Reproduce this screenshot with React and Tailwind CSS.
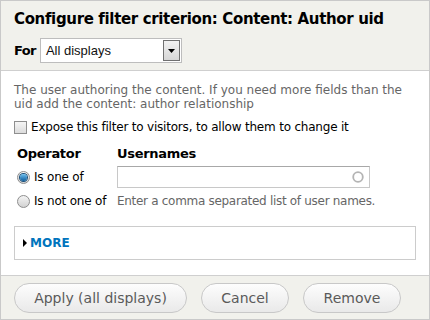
import React from 'react';

const Radio = ({ checked }) => (
  <span className="relative inline-flex h-[13px] w-[13px] shrink-0 items-center justify-center rounded-full border border-[#8e8e8e] bg-gradient-to-b from-[#f4f4f4] to-[#d2d2d2]">
    {checked && (
      <span className="h-[7px] w-[7px] rounded-full bg-gradient-to-b from-[#6cc0f0] to-[#0a5f9e] shadow-[0_0_0_1px_#1a4f7a]" />
    )}
  </span>
);

export default function App() {
  return (
    <div
      className="flex h-[320px] w-[430px] flex-col border border-[#c9c9c9] bg-white text-[#222]"
      style={{ fontFamily: '"DejaVu Sans", sans-serif' }}
    >
      {/* header */}
      <div className="h-[70px] shrink-0 border-b border-[#cfcfcf] bg-[#f1f1ec] px-[13px]">
        <h1 className="pt-[9px] text-[15px] font-bold leading-[18px] tracking-[-0.35px] text-black">
          Configure filter criterion: Content: Author uid
        </h1>
        <div className="mt-[10px] flex items-center gap-[4px]">
          <span className="text-[13px] font-bold tracking-[-0.6px] text-black">For</span>
          <div className="flex h-[25px] w-[142px] items-center border border-[#bdbdbd] bg-white pl-[5px] pr-[1px]">
            <span
              className="flex-1 text-[13px] text-[#111]"
              style={{ fontFamily: '"Liberation Sans", Arial, sans-serif' }}
            >
              All displays
            </span>
            <span className="flex h-[21px] w-[17px] items-center justify-center border border-[#707070] bg-gradient-to-b from-[#f2f2f2] to-[#d6d6d6]">
              <svg width="7" height="4" viewBox="0 0 7 4">
                <path d="M0 0h7L3.5 4z" fill="#000" />
              </svg>
            </span>
          </div>
        </div>
      </div>

      {/* body */}
      <div className="flex-1 px-[13px] pt-[12px]">
        <p className="text-[12px] leading-[14px] text-[#666]">
          The user authoring the content. If you need more fields than the uid add the content: author relationship
        </p>
        <label className="mt-[9px] flex items-center gap-[4px] text-[12px] leading-[15px] tracking-[-0.2px] text-black">
          <span className="h-[13px] w-[13px] shrink-0 border border-[#8f8f8f] bg-gradient-to-b from-[#f6f6f6] to-[#dcdcdc]" />
          Expose this filter to visitors, to allow them to change it
        </label>
        <div className="mt-[11px] flex pl-[3px]">
          <div className="w-[100px]">
            <div className="text-[13px] font-bold leading-[16px] tracking-[-0.3px] text-black">Operator</div>
            <div className="mt-[8px] flex flex-col gap-[9px] text-[12px] leading-[15px] tracking-[-0.2px] text-black">
              <label className="flex items-center gap-[4px]">
                <Radio checked />
                Is one of
              </label>
              <label className="flex items-center gap-[4px]">
                <Radio />
                Is not one of
              </label>
            </div>
          </div>
          <div>
            <div className="text-[13px] font-bold leading-[16px] tracking-[-0.3px] text-black">Usernames</div>
            <div className="mt-[4px] flex h-[22px] w-[253px] items-center justify-end border border-[#c8c8c8] border-t-[#a8a8a8] bg-white pr-[5px]">
              <svg width="12" height="12" viewBox="0 0 12 12">
                <circle cx="6" cy="6" r="4.8" fill="none" stroke="#b4b4b4" strokeWidth="1.8" />
              </svg>
            </div>
            <div className="mt-[6px] text-[12px] leading-[15px] tracking-[-0.3px] text-[#666]">
              Enter a comma separated list of user names.
            </div>
          </div>
        </div>
        <div className="mt-[17px] flex h-[34px] items-center border border-[#ccc] pl-[8px]">
          <svg width="4" height="8" viewBox="0 0 4 8" className="mr-[3px]">
            <path d="M0 0l4 4-4 4z" fill="#000" />
          </svg>
          <span className="text-[12px] font-bold text-[#0074bd]">MORE</span>
        </div>
      </div>

      {/* footer */}
      <div className="flex h-[44px] shrink-0 items-start gap-[14px] border-t border-[#cfcfcf] bg-[#f1f1ec] px-[13px] pt-[7px]">
        {['Apply (all displays)', 'Cancel', 'Remove'].map((b, i) => (
          <button
            key={b}
            className={`flex h-[30px] items-center justify-center rounded-full border border-[#c8c8c8] bg-gradient-to-b from-[#fdfdfd] to-[#e9e9e9] text-[14px] text-[#5a5a5a] ${
              i === 0 ? 'w-[173px]' : i === 1 ? 'w-[88px]' : 'w-[98px]'
            }`}
          >
            {b}
          </button>
        ))}
      </div>
    </div>
  );
}
